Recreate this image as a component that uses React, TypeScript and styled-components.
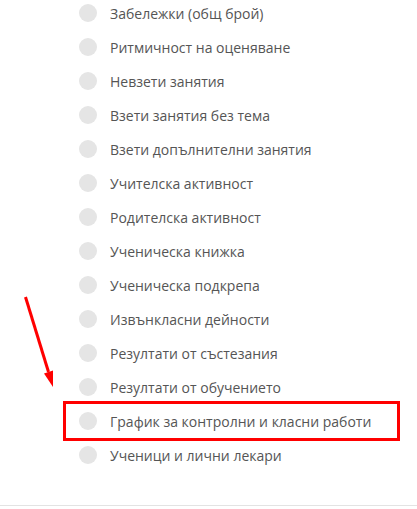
import styled, { createGlobalStyle } from "styled-components";

const GlobalStyle = createGlobalStyle`
  html, body {
    margin: 0;
    padding: 0;
    background: #fff;
  }
  body {
    font-family: "Open Sans", "Liberation Sans", sans-serif;
    overflow: hidden;
  }
`;

const Page = styled.section`
  position: relative;
  width: 417px;
  height: 505px;
  border-bottom: 1px solid #e3e3e3;
  overflow: hidden;
`;

const List = styled.ul`
  list-style: none;
  margin: -4px 0 0 0;
  padding: 0 0 0 79px;
  display: flex;
  flex-direction: column;
`;

const Item = styled.li`
  display: flex;
  align-items: center;
  gap: 13px;
  height: 34px;
  font-size: 14px;
  color: #555;
  white-space: nowrap;
`;

const Radio = styled.span`
  flex: none;
  width: 18px;
  height: 18px;
  border-radius: 50%;
  background: #e5e5e5;
`;

const Highlight = styled.div`
  position: absolute;
  left: 63px;
  top: 401px;
  width: 337px;
  height: 40px;
  box-sizing: border-box;
  border: 3px solid #ff0000;
  pointer-events: none;
`;

const Arrow = styled.svg`
  position: absolute;
  left: 0;
  top: 0;
  pointer-events: none;
`;

const items = [
  "Забележки (общ брой)",
  "Ритмичност на оценяване",
  "Невзети занятия",
  "Взети занятия без тема",
  "Взети допълнителни занятия",
  "Учителска активност",
  "Родителска активност",
  "Ученическа книжка",
  "Ученическа подкрепа",
  "Извънкласни дейности",
  "Резултати от състезания",
  "Резултати от обучението",
  "График за контролни и класни работи",
  "Ученици и лични лекари",
];

export default function App() {
  return (
    <>
      <GlobalStyle />
      <Page>
        <List>
          {items.map((label) => (
            <Item key={label}>
              <Radio />
              {label}
            </Item>
          ))}
        </List>
        <Highlight />
        <Arrow width="70" height="400" viewBox="0 0 70 400">
          <line x1="25.5" y1="297" x2="48.5" y2="372" stroke="#ff0000" strokeWidth="3" />
          <polygon points="44,373.5 53,370.5 53,387" fill="#ff0000" />
        </Arrow>
      </Page>
    </>
  );
}
